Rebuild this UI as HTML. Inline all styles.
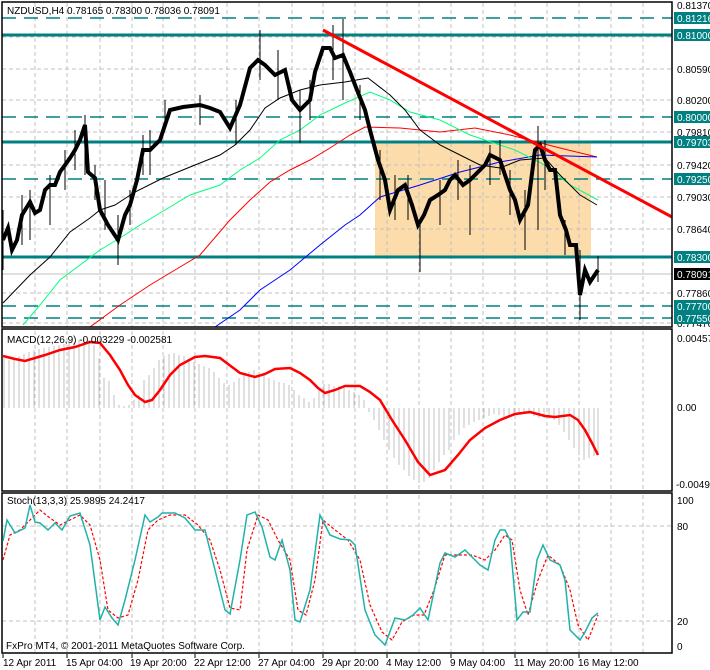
<!DOCTYPE html>
<html><head><meta charset="utf-8"><style>
html,body{margin:0;padding:0;background:#fff;}
svg{display:block;font-family:"Liberation Sans",sans-serif;}
</style></head><body>
<svg width="710" height="670" viewBox="0 0 710 670" xmlns="http://www.w3.org/2000/svg">
<rect width="710" height="670" fill="#fff"/>
<rect x="375" y="142" width="216" height="115" fill="#fcdcaa"/>
<g stroke="#c0c0c0" stroke-dasharray="4,3" stroke-width="1">
<path d="M35 3V327M67 3V327M100 3V327M132 3V327M163 3V327M195 3V327M227 3V327M259 3V327M292 3V327M323 3V327M355 3V327M387 3V327M419 3V327M451 3V327M483 3V327M515 3V327M547 3V327M579 3V327M611 3V327M643 3V327"/>
<path d="M35 331V490M67 331V490M100 331V490M132 331V490M163 331V490M195 331V490M227 331V490M259 331V490M292 331V490M323 331V490M355 331V490M387 331V490M419 331V490M451 331V490M483 331V490M515 331V490M547 331V490M579 331V490M611 331V490M643 331V490"/>
<path d="M35 495V653M67 495V653M100 495V653M132 495V653M163 495V653M195 495V653M227 495V653M259 495V653M292 495V653M323 495V653M355 495V653M387 495V653M419 495V653M451 495V653M483 495V653M515 495V653M547 495V653M579 495V653M611 495V653M643 495V653"/>
<path d="M2 37H672M2 69H672M2 100H672M2 132H672M2 165H672M2 197H672M2 229H672M2 293H672M2 323H672"/>
<path d="M2 526H672M2 621H672"/>
</g>
<path d="M2 274H672" stroke="#c0c0c0"/>
<g stroke="#008080" stroke-width="1.5">
<path d="M2 18H672M2 117H672M2 179H672M2 306H672M2 318H672" stroke-dasharray="14,8"/>
<path d="M2 35H672M2 142H672M2 257H672" stroke-width="3"/>
</g>
<g fill="none" stroke-width="1">
<polyline stroke="#ff0000" points="90,327 120,305 150,285 175,270 200,255 230,220 250,200 270,182 290,170 310,160 330,148 350,135 365,127 400,128 440,132 475,128 510,135 560,148 597,157"/>
<polyline stroke="#0000ff" points="215,327 240,310 260,290 290,270 320,245 345,225 360,215 380,197 420,185 460,172 500,162 540,155 597,157"/>
<polyline stroke="#00ff80" points="23,325 40,305 60,280 80,265 100,250 120,238 140,225 165,210 190,195 220,185 240,170 260,158 280,140 300,130 320,115 345,103 370,92 390,100 410,112 440,120 470,135 515,150 545,165 570,185 598,200"/>
<polyline stroke="#000" points="3,303 30,275 50,257 70,232 90,218 100,210 115,205 135,192 163,178 200,163 220,155 235,145 250,130 265,108 280,98 300,90 320,85 345,82 368,78 390,95 405,110 420,130 440,145 460,155 480,165 500,168 520,160 545,158 560,175 580,195 597,205"/>
</g>
<g stroke="#000" fill="none">
<polyline stroke-width="4" points="3,240 8,228 12,250 17,240 22,215 30,202 35,213 40,210 45,190 50,185 55,185 60,172 65,165 70,158 75,150 80,140 85,125 88,172 95,178 100,210 108,225 118,240 125,215 130,205 137,180 143,150 150,150 160,140 170,110 183,107 200,105 210,108 220,112 230,128 240,105 250,68 258,60 265,65 275,75 285,70 292,100 300,110 310,100 315,72 323,48 330,48 335,58 343,55 350,72 357,90 365,110 370,130 378,160 385,180 390,210 398,190 405,185 412,205 418,225 424,215 430,200 438,195 445,190 450,180 455,175 463,185 470,180 480,170 485,165 490,155 500,160 510,190 515,200 520,220 528,205 535,150 540,145 545,160 550,170 555,170 560,215 566,230 570,245 576,245 580,295 585,270 590,282 598,270"/>
<path stroke-width="1" d="M260 30V80M343 19V100M300 90V143M118 215V265M85 115V175M50 175V225M150 130V175M236 100V145M395 175V220M420 225V272M470 165V235M500 140V175M525 190V250M538 126V230M580 250V320M598 256V282M3 210V270M30 190V240M65 150V190M105 180V230M130 190V225M165 100V130M200 95V125M278 50V100M310 80V120M333 25V80M360 85V120M380 150V200M408 175V220M440 180V225M458 160V200M490 145V185M510 170V215M545 140V190M565 220V255M22 195V245M75 130V170M95 165V200M143 135V175"/>
</g>
<path d="M323 30L672 217" stroke="#ff0000" stroke-width="3"/>
<g stroke="#000" fill="none" stroke-width="1.5">
<rect x="2" y="2" width="670" height="325"/>
<rect x="2" y="329" width="670" height="162"/>
<rect x="2" y="493" width="670" height="160"/>
</g>
<g stroke="#c0c0c0" stroke-width="1">
<path d="M4 408V358M9 408V360M14 408V358M19 408V356M24 408V354M29 408V352M34 408V350M39 408V349M44 408V348M49 408V347M54 408V346M59 408V345M64 408V344M69 408V343M74 408V342M79 408V340M84 408V338M89 408V340M94 408V345M99 408V358M104 408V378M109 408V381M114 408V395M119 408V405M124 408V406M129 408V405M134 408V400M139 408V395M144 408V380M149 408V375M154 408V368M159 408V360M164 408V356M169 408V354M174 408V353M179 408V355M184 408V356M189 408V360M194 408V362M199 408V364M204 408V366M209 408V368M214 408V372M219 408V378M224 408V383M229 408V385M234 408V382M239 408V378M244 408V375M249 408V372M254 408V370M259 408V372M264 408V375M269 408V378M274 408V380M279 408V382M284 408V383M289 408V385M294 408V390M299 408V395M304 408V398M309 408V402M314 408V398M319 408V390M324 408V384M329 408V384M334 408V386M339 408V386M344 408V388M349 408V390M354 408V392M359 408V395M364 408V400"/>
<path d="M369 408V412M374 408V420M379 408V430M384 408V440M389 408V450M394 408V458M399 408V465M404 408V470M409 408V476M414 408V480M419 408V483M424 408V482M429 408V478M434 408V470M439 408V462M444 408V455M449 408V450M454 408V440M459 408V435M464 408V428M469 408V425M474 408V422M479 408V420M484 408V418M489 408V416M494 408V414M499 408V415M504 408V418M509 408V416M514 408V414M519 408V413M524 408V413M529 408V414M534 408V416M539 408V418M544 408V418M549 408V419M554 408V420M559 408V425M564 408V432M569 408V440M574 408V448M579 408V455M584 408V460M589 408V458M594 408V456M598 408V455"/>
</g>
<polyline fill="none" stroke="#ff0000" stroke-width="2.5" points="3,356 15,359 25,361 35,358 45,355 60,350 75,347 90,342 100,343 110,355 120,370 128,385 135,395 145,402 152,400 160,390 170,375 180,365 195,357 205,356 220,358 232,367 240,373 255,377 265,374 275,369 290,368 300,373 310,380 318,388 325,393 335,390 345,386 360,386 370,392 380,400 392,420 405,440 418,462 430,475 445,470 458,455 470,440 485,428 500,420 515,414 530,412 545,416 555,417 570,415 578,420 585,430 592,443 598,455"/>
<polyline fill="none" stroke="#ff0000" stroke-width="1.2" stroke-dasharray="3,2" points="3,560 10,535 20,530 30,520 40,510 50,518 60,525 70,520 80,515 90,525 100,560 108,610 118,618 128,615 138,580 148,530 158,520 170,515 185,515 198,525 210,540 220,570 230,608 240,610 247,550 258,515 268,520 278,540 290,560 298,610 306,615 315,580 323,520 335,530 348,540 360,560 370,605 382,632 392,640 402,622 414,615 424,615 434,590 445,555 460,555 472,555 485,560 495,550 505,535 512,540 520,590 528,615 538,580 548,555 560,565 570,590 578,625 588,640 598,615"/>
<polyline fill="none" stroke="#20b2aa" stroke-width="1.5" points="3,541 7,520 15,533 25,528 30,505 35,522 40,523 48,530 55,523 62,530 70,516 80,513 90,545 100,620 105,607 112,618 118,625 125,600 135,560 145,515 150,522 158,517 162,513 175,513 185,518 195,530 205,530 215,570 225,610 230,614 240,560 247,515 255,512 262,527 270,557 275,560 282,540 290,570 295,620 300,622 310,590 320,515 330,535 340,539 350,540 355,545 365,610 375,635 385,645 395,618 405,620 413,615 420,608 428,620 440,563 445,553 455,557 465,550 475,560 480,565 488,570 495,540 500,530 505,530 510,540 517,620 523,612 530,612 537,560 543,545 550,560 560,565 565,580 570,630 580,640 585,632 592,618 598,613"/>
<g font-size="10" fill="#000">
<text x="7" y="14">NZDUSD,H4  0.78165 0.78300 0.78036 0.78091</text>
<text x="7" y="343">MACD(12,26,9) -0.003229 -0.002581</text>
<text x="7" y="504">Stoch(13,3,3) 25.9895 24.2417</text>
<text x="6" y="649">FxPro MT4, © 2001-2011 MetaQuotes Software Corp.</text>
<text x="677" y="9">0.81370</text>
<text x="677" y="73">0.80590</text>
<text x="677" y="104">0.80200</text>
<text x="677" y="136">0.79810</text>
<text x="677" y="169">0.79420</text>
<text x="677" y="201">0.79030</text>
<text x="677" y="233">0.78640</text>
<text x="677" y="297">0.77860</text>
<text x="677" y="327">0.77470</text>
<text x="677" y="342">0.00457</text>
<text x="677" y="411">0.00</text>
<text x="676" y="488">-0.00491</text>
<text x="677" y="504">100</text>
<text x="677" y="530">80</text>
<text x="677" y="625">20</text>
<text x="677" y="650">0</text>
</g>
<g font-size="10" fill="#fff">
<rect x="674" y="12" width="36" height="12" fill="#008080"/><text x="677" y="22">0.81216</text>
<rect x="674" y="29" width="36" height="12" fill="#008080"/><text x="677" y="39">0.81000</text>
<rect x="674" y="111" width="36" height="12" fill="#008080"/><text x="677" y="121">0.80000</text>
<rect x="674" y="136" width="36" height="12" fill="#008080"/><text x="677" y="146">0.79703</text>
<rect x="674" y="173" width="36" height="12" fill="#008080"/><text x="677" y="183">0.79250</text>
<rect x="674" y="251" width="36" height="12" fill="#008080"/><text x="677" y="261">0.78300</text>
<rect x="674" y="268" width="36" height="12" fill="#000"/><text x="677" y="278">0.78091</text>
<rect x="674" y="300" width="36" height="12" fill="#008080"/><text x="677" y="310">0.77700</text>
<rect x="674" y="312" width="36" height="12" fill="#008080"/><text x="677" y="322">0.77550</text>
</g>
<g font-size="10" fill="#000">
<text x="3" y="666">12 Apr 2011</text>
<text x="66" y="666">15 Apr 04:00</text>
<text x="130" y="666">19 Apr 20:00</text>
<text x="194" y="666">22 Apr 12:00</text>
<text x="258" y="666">27 Apr 04:00</text>
<text x="322" y="666">29 Apr 20:00</text>
<text x="386" y="666">4 May 12:00</text>
<text x="450" y="666">9 May 04:00</text>
<text x="514" y="666">11 May 20:00</text>
<text x="578" y="666">16 May 12:00</text>
</g>
<g stroke="#000"><path d="M3 654V658M67 654V658M132 654V658M195 654V658M259 654V658M323 654V658M387 654V658M451 654V658M515 654V658M579 654V658"/></g>
</svg>
</body></html>
